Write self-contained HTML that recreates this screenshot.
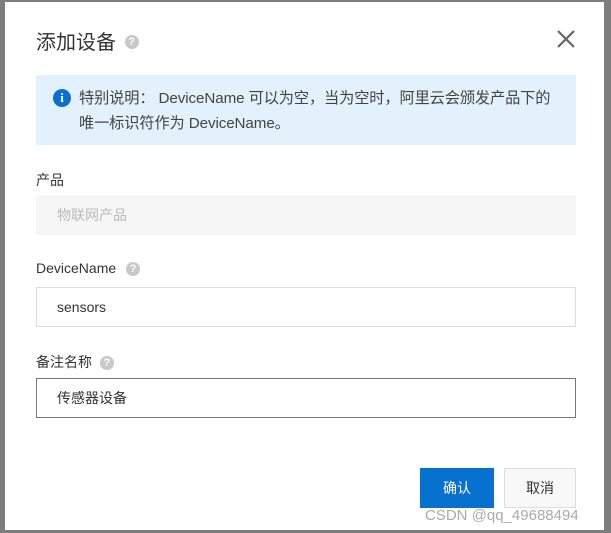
<!DOCTYPE html>
<html><head><meta charset="utf-8"><style>
*{margin:0;padding:0;box-sizing:border-box}
body{width:611px;height:533px;background:#7d7d7d;position:relative;overflow:hidden;font-family:"Liberation Sans","Noto Sans CJK SC",sans-serif;color:#333}
.dlg{position:absolute;left:5px;top:2px;width:599px;height:528px;background:#fff}
.a{position:absolute}
.q{display:inline-block;width:14px;height:14px;border-radius:50%;background:#c8c8c8;color:#fff;font-size:11px;font-weight:bold;text-align:center;line-height:14px;vertical-align:middle}
.lbl{font-size:14px;color:#333}
.inp{position:absolute;left:31px;width:540px;height:40px;border:1px solid #dcdcdc;font-size:14px;padding-left:20px;line-height:38px}
</style></head><body>
<div class="dlg">
<div class="a" style="left:31px;top:24px;font-size:20px;color:#333">添加设备 <span class="q" style="margin-left:3px;margin-top:-3px">?</span></div>
<svg class="a" style="left:551px;top:27px" width="20" height="20"><path d="M2 2L18 18M18 2L2 18" stroke="#666" stroke-width="2.2"/></svg>
<div class="a" style="left:31px;top:73px;width:540px;height:70px;background:#e3f1fc"></div>
<div class="a" style="left:48px;top:87px;width:18px;height:18px;border-radius:50%;background:#0a6fd1;color:#fff;font-size:13px;font-weight:bold;text-align:center;line-height:18px;font-family:'Liberation Serif',serif">i</div>
<div class="a" style="left:74px;top:84px;font-size:15.2px;line-height:25px;color:#444;width:500px;white-space:nowrap;letter-spacing:-0.1px">特别说明： DeviceName 可以为空，当为空时，阿里云会颁发产品下的<br>唯一标识符作为 DeviceName。</div>
<div class="a lbl" style="left:31px;top:168px">产品</div>
<div class="inp" style="top:193px;background:#f6f6f6;border-color:#f6f6f6;color:#bbb">物联网产品</div>
<div class="a lbl" style="left:31px;top:258px">DeviceName <span class="q" style="margin-left:6px">?</span></div>
<div class="inp" style="top:285px">sensors</div>
<div class="a lbl" style="left:31px;top:350px">备注名称 <span class="q" style="margin-left:4px">?</span></div>
<div class="inp" style="top:376px;border-color:#777">传感器设备</div>
<div class="a" style="left:415px;top:466px;width:74px;height:40px;background:#0771d0;color:#fff;font-size:14px;text-align:center;line-height:40px">确认</div>
<div class="a" style="left:499px;top:466px;width:72px;height:40px;background:#f8f8f8;border:1px solid #ddd;font-size:14px;text-align:center;line-height:38px">取消</div>
<div class="a" style="left:420px;top:505px;font-size:15px;color:#aaa">CSDN @qq_49688494</div>
</div>
</body></html>
